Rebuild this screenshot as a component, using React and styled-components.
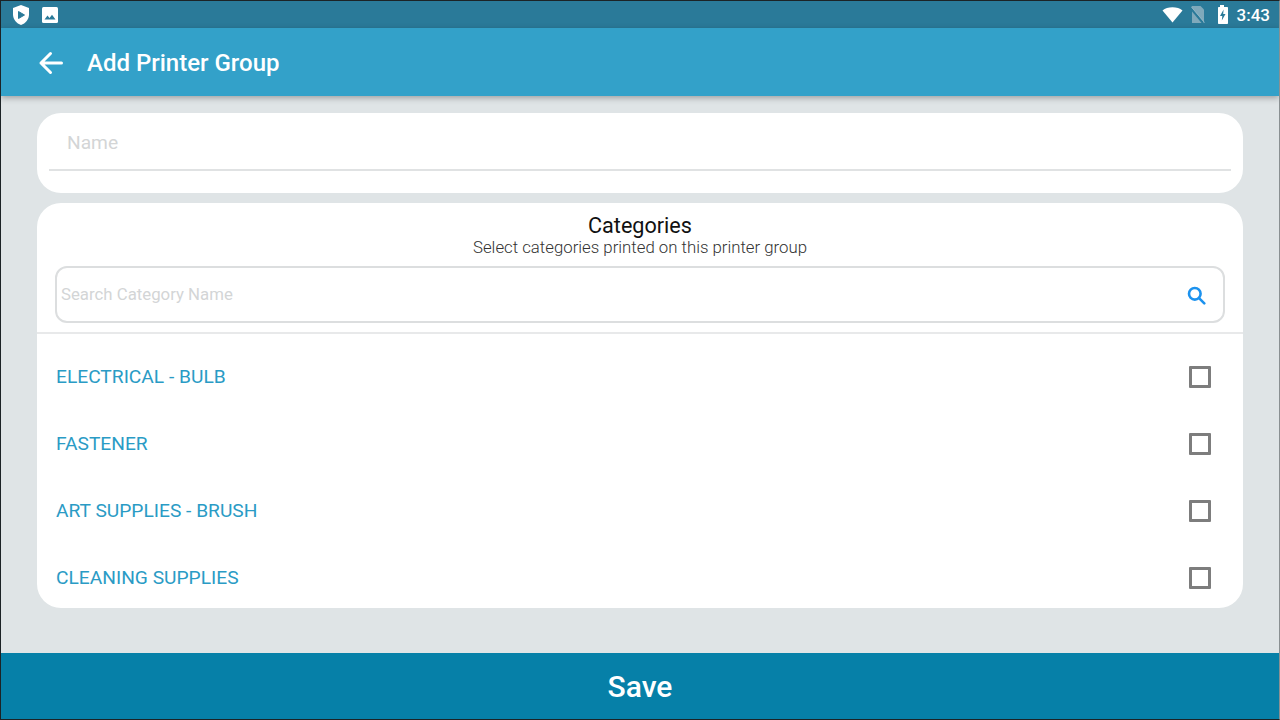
import React from 'react';
import styled, { createGlobalStyle } from 'styled-components';

const GlobalStyle = createGlobalStyle`
  html, body {
    margin: 0;
    padding: 0;
    background: #fff;
  }
  * {
    box-sizing: border-box;
  }
`;

const Screen = styled.div`
  width: 1280px;
  height: 720px;
  display: flex;
  flex-direction: column;
  background: #dfe4e6;
  border: 1px solid #1c2326;
  border-right-color: #8a9092;
  font-family: Roboto, "Liberation Sans", sans-serif;
  overflow: hidden;
`;

const StatusBar = styled.div`
  height: 27px;
  flex: none;
  display: flex;
  align-items: center;
  justify-content: space-between;
  padding: 0 9px 0 11px;
  background: #2a7a99;
  color: #fff;
`;

const StatusGroup = styled.div`
  display: flex;
  align-items: center;
  gap: ${p => p.$gap}px;
`;

const Clock = styled.span`
  font-size: 17px;
  font-weight: 500;
  margin-left: 1px;
`;

const Header = styled.div`
  height: 68px;
  flex: none;
  display: flex;
  align-items: center;
  gap: 21px;
  padding: 2px 0 0 37px;
  background: #33a1c9;
  box-shadow: 0 2px 6px rgba(0, 0, 0, 0.3);
  position: relative;
  color: #fff;
`;

const Title = styled.h1`
  margin: 0;
  font-size: 24px;
  font-weight: 500;
`;

const Body = styled.div`
  flex: 1;
  display: flex;
  flex-direction: column;
  gap: 10px;
  padding: 17px 36px 0;
`;

const Card = styled.div`
  background: #fff;
  border-radius: 24px;
`;

const NameCard = styled(Card)`
  height: 80px;
  padding: 0 12px;
`;

const NameField = styled.div`
  height: 58px;
  padding: 18px 18px 0;
  border-bottom: 2px solid #e0e2e3;
  color: #d3d5d6;
  font-size: 19.2px;
`;

const CategoriesCard = styled(Card)`
  height: 405px;
  overflow: hidden;
`;

const Intro = styled.div`
  padding-top: 11px;
  text-align: center;
`;

const Heading = styled.div`
  font-size: 21.6px;
  font-weight: 400;
  line-height: 23px;
  color: #111;
`;

const Sub = styled.div`
  font-size: 16.8px;
  font-weight: 300;
  line-height: 20px;
  color: #333;
`;

const SearchWrap = styled.div`
  padding: 9px 18px 9px;
  border-bottom: 2px solid #e8e9ea;
`;

const SearchBox = styled.div`
  height: 57px;
  display: flex;
  align-items: center;
  justify-content: space-between;
  padding: 0 17px 0 4px;
  border: 2px solid #dcdedf;
  border-radius: 12px;
  color: #d3d5d6;
  font-size: 16.8px;
`;

const SearchText = styled.span`
  margin-bottom: 2px;
`;

const List = styled.div`
  display: flex;
  flex-direction: column;
  padding: 9px 32px 0 19px;
`;

const Row = styled.div`
  height: 67px;
  display: flex;
  align-items: center;
  justify-content: space-between;
  color: #2a9bc5;
  font-size: 19.2px;
`;

const CheckBox = styled.span`
  width: 22px;
  height: 22px;
  border: 3px solid #7d7d7d;
  border-radius: 1px;
`;

const SaveBar = styled.div`
  height: 66px;
  flex: none;
  display: flex;
  align-items: center;
  justify-content: center;
  background: #0680a8;
  color: #fff;
  font-size: 30px;
  font-weight: 500;
`;

const SearchGlyph = styled.svg`
  margin-top: 2px;
`;

const ShieldIcon = () => (
  <svg width="18" height="20" viewBox="0 0 18 20">
    <path fill="#fff" d="M9 0 L17 3 V9.500 C17 14.500 13.500 18.500 9 20 C4.500 18.500 1 14.500 1 9.500 V3 Z" />
    <path fill="#2a7a99" stroke="#2a7a99" strokeWidth="1" strokeLinejoin="round" d="M6.500 6.500 L12.500 10 L6.500 13.500 Z" />
  </svg>
);

const ImageIcon = () => (
  <svg width="16" height="16" viewBox="0 0 16 16">
    <rect width="16" height="16" rx="1.500" fill="#fff" />
    <path fill="#2a7a99" d="M2.500 12.500 L5.500 8.500 L7.500 11 L10 7.800 L13.500 12.500 Z" />
  </svg>
);

const WifiIcon = () => (
  <svg width="21" height="16" viewBox="0 0 21 16">
    <path fill="#fff" d="M10.500 15.500 L0.500 3.500 C3 1.500 6.500 0.300 10.500 0.300 C14.500 0.300 18 1.500 20.500 3.500 Z" />
  </svg>
);

const NoSimIcon = () => (
  <svg width="14" height="17" viewBox="0 0 14 17">
    <path fill="#7fa9bb" d="M1 0 H9.500 L13 3.500 V17 H1 Z" />
    <path stroke="#2a7a99" strokeWidth="2.200" d="M0 2.500 L12 17" />
    <path stroke="#8fb6c6" strokeWidth="1" d="M0 0.500 L13.500 16.500" />
  </svg>
);

const BatteryIcon = () => (
  <svg width="15" height="19" viewBox="0 0 15 19">
    <path fill="#fff" d="M7 0 H11 V2 H14 C14.600 2 15 2.400 15 3 V18 C15 18.600 14.600 19 14 19 H6 C5.400 19 5 18.600 5 18 V3 C5 2.400 5.400 2 6 2 H7 Z" />
    <path fill="#2a7a99" d="M10.600 4.500 L7 11 H9.300 L8.800 15.500 L12.500 9 H10.200 Z" />
  </svg>
);

const BackIcon = () => (
  <svg width="28" height="28" viewBox="0 0 28 28" fill="none" stroke="#fff" strokeWidth="3" strokeLinecap="round" strokeLinejoin="round">
    <path d="M23.500 14 H3 M12.500 4.500 L3 14 L12.500 23.500" />
  </svg>
);

const SearchIcon = () => (
  <SearchGlyph width="19" height="19" viewBox="0 0 19 19" fill="none" stroke="#1c92ee" strokeWidth="2.600" strokeLinecap="round">
    <circle cx="7.800" cy="7.800" r="5.800" />
    <path d="M12.300 12.300 L17.300 17.300" />
  </SearchGlyph>
);

const categories = ['ELECTRICAL - BULB', 'FASTENER', 'ART SUPPLIES - BRUSH', 'CLEANING SUPPLIES'];

export default function App() {
  return (
    <Screen>
      <GlobalStyle />
      <StatusBar>
        <StatusGroup $gap={12}>
          <ShieldIcon />
          <ImageIcon />
        </StatusGroup>
        <StatusGroup $gap={8}>
          <WifiIcon />
          <NoSimIcon />
          <BatteryIcon />
          <Clock>3:43</Clock>
        </StatusGroup>
      </StatusBar>
      <Header>
        <BackIcon />
        <Title>Add Printer Group</Title>
      </Header>
      <Body>
        <NameCard>
          <NameField>Name</NameField>
        </NameCard>
        <CategoriesCard>
          <Intro>
            <Heading>Categories</Heading>
            <Sub>Select categories printed on this printer group</Sub>
          </Intro>
          <SearchWrap>
            <SearchBox>
              <SearchText>Search Category Name</SearchText>
              <SearchIcon />
            </SearchBox>
          </SearchWrap>
          <List>
            {categories.map(name => (
              <Row key={name}>
                {name}
                <CheckBox />
              </Row>
            ))}
          </List>
        </CategoriesCard>
      </Body>
      <SaveBar>Save</SaveBar>
    </Screen>
  );
}
